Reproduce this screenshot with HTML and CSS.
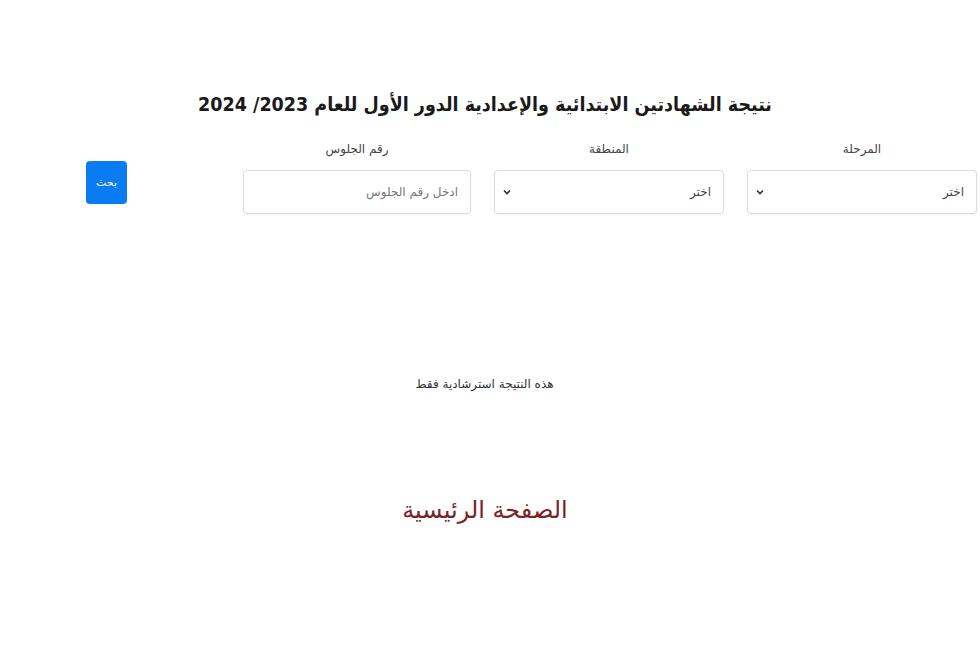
FILE: index.html
```html
<!DOCTYPE html>
<html lang="ar" dir="rtl">
<head>
<meta charset="utf-8">
<title>نتيجة الشهادتين</title>
<link rel="stylesheet" href="styles.css">
</head>
<body>
<main class="page">
  <h1 class="title">نتيجة الشهادتين الابتدائية والإعدادية الدور الأول للعام 2023/ 2024</h1>
  <form class="search">
    <div class="field">
      <label class="label">المرحلة</label>
      <div class="control select"><span>اختر</span><svg class="chev" viewBox="0 0 8 6" width="8" height="6"><path d="M1 1.5 L4 4.5 L7 1.5" fill="none" stroke="#333" stroke-width="1.6"/></svg></div>
    </div>
    <div class="field">
      <label class="label">المنطقة</label>
      <div class="control select"><span>اختر</span><svg class="chev" viewBox="0 0 8 6" width="8" height="6"><path d="M1 1.5 L4 4.5 L7 1.5" fill="none" stroke="#333" stroke-width="1.6"/></svg></div>
    </div>
    <div class="field narrow">
      <label class="label">رقم الجلوس</label>
      <div class="control input"><span class="ph">ادخل رقم الجلوس</span></div>
    </div>
    <button type="button" class="btn">بحث</button>
  </form>
  <p class="note">هذه النتيجة استرشادية فقط</p>
  <p class="home">الصفحة الرئيسية</p>
</main>
</body>
</html>
```
FILE: styles.css
```css
html, body {
  margin: 0;
  padding: 0;
  background: #fff;
}
body {
  font-family: "DejaVu Sans", "Noto Sans", sans-serif;
  color: #222;
  direction: rtl;
}
.page {
  width: 980px;
  height: 654px;
  overflow: hidden;
}
.title {
  margin: 88px 0 0;
  padding-right: 10px;
  text-align: center;
  font-family: "DejaVu Sans Condensed", "DejaVu Sans", sans-serif;
  font-stretch: condensed;
  font-size: 19.5px;
  font-weight: bold;
  line-height: 34px;
  color: #1a1a1a;
}
.search {
  display: flex;
  align-items: flex-start;
  padding-right: 3px;
  margin-top: 17px;
  gap: 23px;
}
.field {
  width: 230px;
  display: flex;
  flex-direction: column;
  align-items: center;
}
.field.narrow {
  width: 228px;
}
.label {
  font-size: 12px;
  line-height: 20px;
  color: #444;
  margin-bottom: 11px;
}
.control {
  box-sizing: border-box;
  width: 100%;
  height: 44px;
  border: 1px solid #dcdcdc;
  border-radius: 4px;
  box-shadow: 0 1px 2px rgba(0,0,0,0.06);
  display: flex;
  align-items: center;
  justify-content: space-between;
  padding: 0 12px 0 8px;
  font-size: 12px;
  color: #444;
}
.ph {
  color: #777;
}
.btn {
  margin-top: 22px;
  margin-right: 93px;
  width: 41px;
  height: 43px;
  border: 0;
  border-radius: 4px;
  background: #0b7bf2;
  color: #fff;
  font-family: "DejaVu Sans", sans-serif;
  font-size: 11px;
  padding: 0;
}
.note {
  margin: 160px 0 0;
  padding-right: 11px;
  text-align: center;
  font-size: 12px;
  line-height: 20px;
  color: #333;
}
.home {
  margin: 96px 0 0;
  padding-right: 10px;
  text-align: center;
  font-size: 24px;
  line-height: 40px;
  color: #7a2326;
}
```
